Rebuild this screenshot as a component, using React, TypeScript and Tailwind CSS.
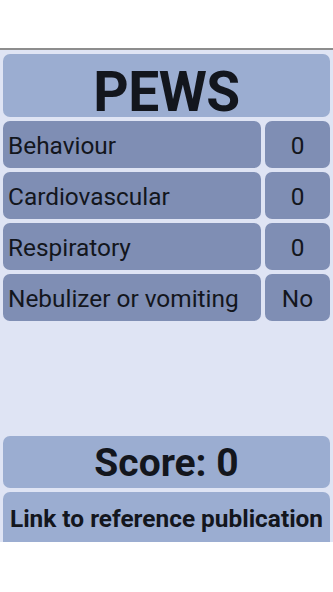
export default function App() {
  const rows = [
    { label: "Behaviour", value: "0" },
    { label: "Cardiovascular", value: "0" },
    { label: "Respiratory", value: "0" },
    { label: "Nebulizer or vomiting", value: "No" },
  ]

  return (
    <div
      className="flex h-[592px] w-[333px] flex-col bg-white text-[#13161d]"
      style={{ fontFamily: "Roboto, 'Noto Sans', sans-serif" }}
    >
      <div className="h-[48px] shrink-0 bg-white" />
      <div className="h-[2px] shrink-0 bg-[#8d8d8d]" />
      <div className="flex h-[492px] shrink-0 flex-col gap-[4px] bg-[#dfe4f4] px-[3px] pt-[4px]">
        {/* Title */}
        <div className="flex h-[63px] shrink-0 items-center justify-center rounded-[7px] bg-[#9badd1] pt-[14px]">
          <span className="text-[55px] font-bold leading-none tracking-[-0.5px]">PEWS</span>
        </div>

        {/* Parameter rows */}
        {rows.map((row) => (
          <div key={row.label} className="flex h-[47px] shrink-0 gap-[4px]">
            <div className="flex flex-1 items-center rounded-[7px] bg-[#7f8eb4] pl-[5px] pt-[4px]">
              <span className="text-[24.4px] leading-none">{row.label}</span>
            </div>
            <div className="flex w-[65px] items-center justify-center rounded-[7px] bg-[#7f8eb4] pt-[4px]">
              <span className="text-[24.4px] leading-none">{row.value}</span>
            </div>
          </div>
        ))}

        <div className="flex-1" />

        {/* Score */}
        <div className="flex h-[52px] shrink-0 items-center justify-center rounded-[7px] bg-[#9badd1] pt-[2px]">
          <span className="text-[39px] font-bold leading-none">Score: 0</span>
        </div>
        <div className="flex h-[50px] shrink-0 items-center justify-center rounded-t-[7px] bg-[#9badd1] pt-[4px]">
          <span className="text-[24.4px] font-bold leading-none">Link to reference publication</span>
        </div>
      </div>
      <div className="flex-1 bg-white" />
    </div>
  )
}
